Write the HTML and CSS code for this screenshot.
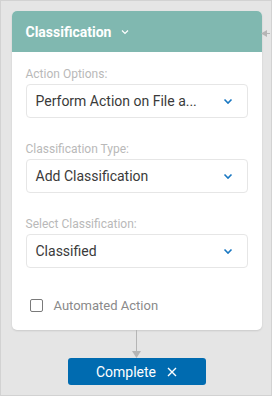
FILE: index.html
```html
<!DOCTYPE html>
<html lang="en">
<head>
    <meta charset="UTF-8">
    <meta name="viewport" content="width=device-width, initial-scale=1.0">
    <title>Classification</title>
    <link rel="stylesheet" href="styles.css">
</head>
<body>
    <div class="canvas">
        <!-- incoming connector on the right -->
        <div class="link-in">
            <svg width="9" height="9" viewBox="0 0 9 9"><path d="M0 4.5 L6 1 L6 8 Z" fill="#b5b5b5"/><rect x="5" y="4" width="4" height="1" fill="#b5b5b5"/></svg>
        </div>

        <div class="card">
            <div class="card-header">
                <span>Classification</span>
                <svg class="head-chev" width="10" height="10" viewBox="0 0 10 10"><path d="M2 3.5 L5 6.5 L8 3.5" fill="none" stroke="#fff" stroke-width="1.2"/></svg>
            </div>
            <div class="card-body">
                <div class="field">
                    <label>Action Options:</label>
                    <div class="select">
                        <span>Perform Action on File a...</span>
                        <svg width="12" height="12" viewBox="0 0 12 12"><path d="M2.5 4.5 L6 8 L9.5 4.5" fill="none" stroke="#1a78c2" stroke-width="1.6"/></svg>
                    </div>
                </div>
                <div class="field">
                    <label>Classification Type:</label>
                    <div class="select">
                        <span>Add Classification</span>
                        <svg width="12" height="12" viewBox="0 0 12 12"><path d="M2.5 4.5 L6 8 L9.5 4.5" fill="none" stroke="#1a78c2" stroke-width="1.6"/></svg>
                    </div>
                </div>
                <div class="field">
                    <label>Select Classification:</label>
                    <div class="select">
                        <span>Classified</span>
                        <svg width="12" height="12" viewBox="0 0 12 12"><path d="M2.5 4.5 L6 8 L9.5 4.5" fill="none" stroke="#1a78c2" stroke-width="1.6"/></svg>
                    </div>
                </div>
                <div class="check-row">
                    <span class="checkbox"></span>
                    <span>Automated Action</span>
                </div>
            </div>
        </div>

        <div class="link-down">
            <div class="line"></div>
            <svg width="9" height="7" viewBox="0 0 9 7"><path d="M0 0 L9 0 L4.5 7 Z" fill="#b5b5b5"/></svg>
        </div>

        <button class="complete-btn">
            Complete
            <svg width="10" height="10" viewBox="0 0 10 10"><path d="M1 1 L9 9 M9 1 L1 9" stroke="#fff" stroke-width="1.4"/></svg>
        </button>
    </div>
</body>
</html>
```

FILE: styles.css
```css
body {
    margin: 0;
    font-family: Roboto, "Liberation Sans", sans-serif;
    background-color: #e5e5e5;
}
.canvas {
    position: relative;
    box-sizing: border-box;
    width: 272px;
    height: 396px;
    border: 1px solid #d2d2d2;
    background-color: #e5e5e5;
    padding: 10px 10px 0 11px;
    display: flex;
    flex-direction: column;
    align-items: center;
}
.link-in {
    position: absolute;
    right: 1px;
    top: 28px;
    height: 9px;
}
.link-in svg {
    display: block;
}

/* card */
.card {
    width: 250px;
    background: white;
    border-radius: 5px;
    box-shadow: 0 1px 2px rgba(0, 0, 0, 0.12);
    overflow: hidden;
}
.card-header {
    background-color: #80b8b0;
    height: 41px;
    display: flex;
    align-items: center;
    padding-left: 14px;
    color: white;
    font-size: 14px;
    font-weight: bold;
}
.head-chev {
    margin-left: 9px;
}
.card-body {
    padding: 14px 14px 17px 14px;
}
.field {
    margin-bottom: 23px;
}
.field label {
    display: block;
    font-size: 12px;
    color: #b9b9b9;
    line-height: 16px;
    margin-bottom: 2px;
}
.select {
    height: 32px;
    border: 1px solid #e6e6e6;
    border-radius: 4px;
    display: flex;
    align-items: center;
    justify-content: space-between;
    padding: 0 13px 0 9px;
    font-size: 14px;
    color: #3a3a3a;
}
.select svg {
    display: block;
}
.check-row {
    display: flex;
    align-items: center;
    margin-top: 30px;
    padding-left: 4px;
    font-size: 13px;
    color: #8a8a8a;
}
.checkbox {
    width: 11px;
    height: 11px;
    border: 1.5px solid #7a7a7a;
    border-radius: 2px;
    margin-right: 11px;
}

/* connector + button */
.link-down {
    display: flex;
    flex-direction: column;
    align-items: center;
    margin-left: -1px;
}
.link-down .line {
    width: 1px;
    height: 21px;
    background: #b5b5b5;
}
.link-down svg {
    display: block;
}
.complete-btn {
    width: 138px;
    height: 27px;
    background-color: #006bb0;
    color: white;
    border: none;
    border-radius: 3px;
    font-family: Roboto, "Liberation Sans", sans-serif;
    font-size: 14px;
    font-weight: normal;
    display: flex;
    align-items: center;
    justify-content: center;
    gap: 11px;
    padding: 0;
    cursor: pointer;
}
```
